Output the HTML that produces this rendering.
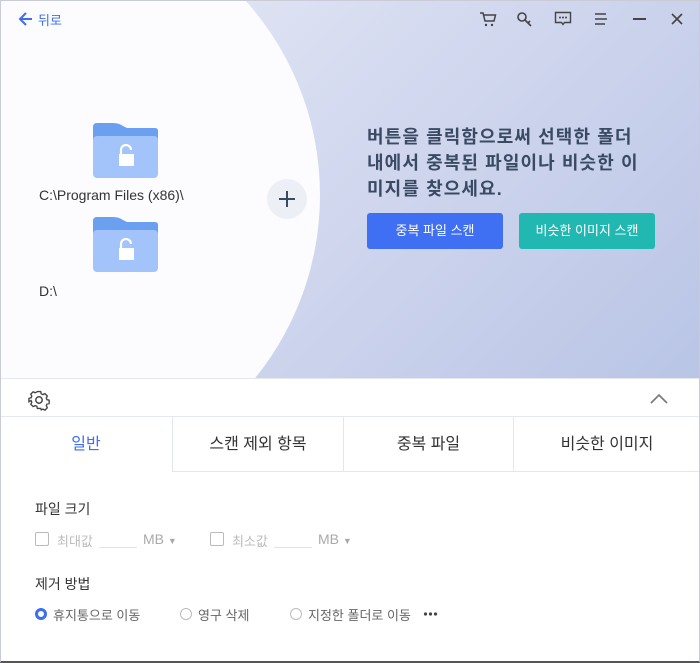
<!DOCTYPE html>
<html><head><meta charset="utf-8"><style>
*{margin:0;padding:0;box-sizing:border-box}
body{width:700px;height:663px;overflow:hidden;font-family:"Liberation Sans","Noto Sans CJK KR",sans-serif;background:#fff;position:relative}
.top{position:absolute;left:0;top:0;width:700px;height:379px;overflow:hidden;background:linear-gradient(135deg,#e9ecf6 0%,#d3d9ef 45%,#b9c5e6 100%)}
.circle{position:absolute;left:-262px;top:-96px;width:582px;height:582px;border-radius:50%;background:#fcfcfe}
.abs{position:absolute}
.k{color:#333;font-size:14px}
.btn{position:absolute;top:213px;height:36px;border-radius:3px;color:#fff;font-size:13px;text-align:center;line-height:36px}
.tabs{position:absolute;top:417px;left:0;width:700px;height:55px}
.tab{position:absolute;top:0;height:55px;font-size:16px;color:#333;text-align:center;line-height:55px;border-bottom:1px solid #e3e6ef;border-left:1px solid #e3e6ef}
.g{color:#bbb;font-size:13px}
</style></head><body>
<div class="top">
<div class="circle"></div>
<svg class="abs" style="left:18px;top:11px" width="16" height="16" viewBox="0 0 16 16"><path d="M8 2L2 8l6 6M2 8h12" stroke="#3d6ef0" stroke-width="2" fill="none"/></svg>
<div class="abs" style="left:38px;top:10px;font-size:13px;color:#3d6ef0">뒤로</div>
<svg class="abs" style="left:93px;top:122px" width="66" height="56" viewBox="0 0 66 56"><path d="M0 5Q0 1 4 1H20Q26 1 30 4L34 6H62Q65 6 65 9V20H0Z" fill="#6b9ff0"/><rect x="0" y="14" width="65" height="42" rx="4" fill="#a3c3fb"/><rect x="26" y="32" width="15" height="12" fill="#fff"/><path d="M28 32V28a5 5 0 0 1 10 0" stroke="#fff" stroke-width="2.2" fill="none"/></svg>
<div class="abs k" style="left:39px;top:187px">C:\Program Files (x86)\</div>
<svg class="abs" style="left:93px;top:216px" width="66" height="56" viewBox="0 0 66 56"><path d="M0 5Q0 1 4 1H20Q26 1 30 4L34 6H62Q65 6 65 9V20H0Z" fill="#6b9ff0"/><rect x="0" y="14" width="65" height="42" rx="4" fill="#a3c3fb"/><rect x="26" y="32" width="15" height="12" fill="#fff"/><path d="M28 32V28a5 5 0 0 1 10 0" stroke="#fff" stroke-width="2.2" fill="none"/></svg>
<div class="abs k" style="left:39px;top:283px">D:\</div>
<div class="abs" style="left:267px;top:179px;width:40px;height:40px;border-radius:50%;background:#eceff5"></div>
<svg class="abs" style="left:277px;top:189px" width="20" height="20"><path d="M10 2v16M2 10h16" stroke="#3a4a60" stroke-width="2"/></svg>
<svg class="abs" style="left:479px;top:11px" width="18" height="16" viewBox="0 0 18 16"><path d="M1 2h3l2 8h9l1.5-6H5" stroke="#444" stroke-width="1.5" fill="none"/><circle cx="7" cy="14" r="1.2" fill="#444"/><circle cx="13" cy="14" r="1.2" fill="#444"/></svg>
<svg class="abs" style="left:516px;top:11px" width="18" height="16" viewBox="0 0 18 16"><circle cx="6" cy="6" r="4" stroke="#444" stroke-width="1.6" fill="none"/><path d="M9 9l6 6M12 12l2-2" stroke="#444" stroke-width="1.6"/></svg>
<svg class="abs" style="left:554px;top:11px" width="18" height="16" viewBox="0 0 18 16"><path d="M1.5 1.5h15v10h-6l-1.5 2-1.5-2h-6z" stroke="#444" stroke-width="1.4" fill="none"/><circle cx="6" cy="6.5" r="1" fill="#444"/><circle cx="9" cy="6.5" r="1" fill="#444"/><circle cx="12" cy="6.5" r="1" fill="#444"/></svg>
<svg class="abs" style="left:594px;top:12px" width="14" height="14"><path d="M1 2h11M1 7h12M1 12h10" stroke="#444" stroke-width="1.5"/></svg>
<div class="abs" style="left:633px;top:18px;width:13px;height:2px;background:#444"></div>
<svg class="abs" style="left:671px;top:13px" width="12" height="12"><path d="M1 1l10 10M11 1L1 11" stroke="#444" stroke-width="1.6"/></svg>
<div class="abs" style="left:367px;top:124px;font-size:18px;font-weight:bold;color:#3b4a63;line-height:26px;letter-spacing:1.1px">버튼을 클릭함으로써 선택한 폴더<br>내에서 중복된 파일이나 비슷한 이<br>미지를 찾으세요.</div>
<div class="btn" style="left:367px;width:136px;background:#3f6ff2">중복 파일 스캔</div>
<div class="btn" style="left:519px;width:136px;background:#20b8b0">비슷한 이미지 스캔</div>
</div>
<div class="abs" style="left:0;top:378px;width:700px;height:1px;background:#e6e8ef"></div>
<svg class="abs" style="left:28px;top:389px" width="22" height="22" viewBox="0 0 24 24"><path d="M10 2h4l.6 2.6 2 1 2.4-1.2 2.8 2.8-1.2 2.4.8 2 2.6.6v4l-2.6.6-.8 2 1.2 2.4-2.8 2.8-2.4-1.2-2 .8L14 22h-4l-.6-2.6-2-.8-2.4 1.2-2.8-2.8 1.2-2.4-.8-2L0 14v-4l2.6-.6.8-2-1.2-2.4 2.8-2.8 2.4 1.2 2-1z" transform="translate(1 1) scale(.92)" stroke="#444" stroke-width="1.6" fill="none"/><circle cx="12" cy="12" r="3.5" stroke="#444" stroke-width="1.6" fill="none"/></svg>
<svg class="abs" style="left:650px;top:393px" width="18" height="12"><path d="M1 10l8-8 8 8" stroke="#777" stroke-width="1.6" fill="none"/></svg>
<div class="abs" style="left:0;top:416px;width:700px;height:1px;background:#e6e8ef"></div>
<div class="tabs">
<div class="tab" style="left:0;width:172px;border:none;color:#3d6ef0">일반</div>
<div class="tab" style="left:172px;width:171px">스캔 제외 항목</div>
<div class="tab" style="left:343px;width:170px">중복 파일</div>
<div class="tab" style="left:513px;width:187px">비슷한 이미지</div>
</div>
<div class="abs" style="left:35px;top:499px;font-size:14px;color:#333">파일 크기</div>
<div class="abs" style="left:35px;top:532px;width:14px;height:14px;border:1px solid #bbb;border-radius:2px"></div>
<div class="abs g" style="left:57px;top:531px">최대값</div>
<div class="abs" style="left:99px;top:547px;width:38px;height:1px;background:#e3e3e3"></div>
<div class="abs" style="left:143px;top:531px;font-size:14px;color:#aaa">MB <span style="font-size:9px">▼</span></div>
<div class="abs" style="left:210px;top:532px;width:14px;height:14px;border:1px solid #bbb;border-radius:2px"></div>
<div class="abs g" style="left:232px;top:531px">최소값</div>
<div class="abs" style="left:274px;top:547px;width:38px;height:1px;background:#e3e3e3"></div>
<div class="abs" style="left:318px;top:531px;font-size:14px;color:#aaa">MB <span style="font-size:9px">▼</span></div>
<div class="abs" style="left:35px;top:574px;font-size:14px;color:#333">제거 방법</div>
<div class="abs" style="left:35px;top:608px;width:12px;height:12px;border:3.5px solid #3d6ef0;border-radius:50%"></div>
<div class="abs" style="left:53px;top:605px;font-size:13px;color:#666">휴지통으로 이동</div>
<div class="abs" style="left:180px;top:608px;width:12px;height:12px;border:1px solid #bbb;border-radius:50%"></div>
<div class="abs" style="left:198px;top:605px;font-size:13px;color:#666">영구 삭제</div>
<div class="abs" style="left:290px;top:608px;width:12px;height:12px;border:1px solid #bbb;border-radius:50%"></div>
<div class="abs" style="left:308px;top:605px;font-size:13px;color:#666">지정한 폴더로 이동</div>
<svg class="abs" style="left:423px;top:611px" width="16" height="6"><circle cx="2.5" cy="3" r="1.6" fill="#444"/><circle cx="7.5" cy="3" r="1.6" fill="#444"/><circle cx="12.5" cy="3" r="1.6" fill="#444"/></svg>
<div class="abs" style="left:0;top:0;width:700px;height:663px;border:1px solid #c9ccd6;border-bottom:2px solid #555"></div>
</body></html>
